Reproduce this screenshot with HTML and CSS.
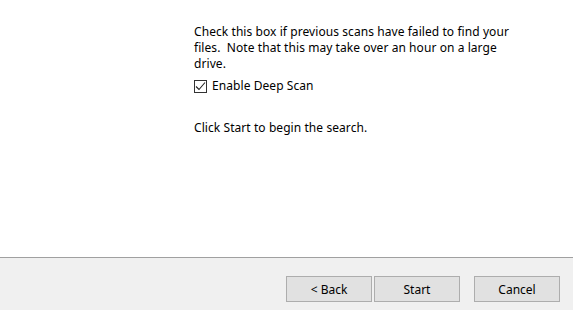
FILE: index.html
```html
<!DOCTYPE html>
<html>
<head>
<meta charset="utf-8">
<link rel="stylesheet" href="styles.css">
</head>
<body>
<div class="window">
  <main class="content">
    <p class="desc">Check this box if previous scans have failed to find your files.&nbsp; Note that this may take over an hour on a large drive.</p>
    <label class="check">
      <span class="box">
        <svg width="11" height="11" viewBox="0 0 11 11"><path d="M1 5.5 L4 8.5 L10 1.5" fill="none" stroke="#222" stroke-width="1.1"/></svg>
      </span>
      <span>Enable Deep Scan</span>
    </label>
    <p class="hint">Click Start to begin the search.</p>
  </main>
  <footer class="footer">
    <div class="btn-pair">
      <button class="btn">&lt; Back</button>
      <button class="btn">Start</button>
    </div>
    <button class="btn">Cancel</button>
  </footer>
</div>
</body>
</html>
```

FILE: styles.css
```css
* { box-sizing: border-box; }
html, body { margin: 0; padding: 0; }
body {
  width: 573px;
  height: 310px;
  overflow: hidden;
  background: #fff;
  font-family: "Segoe UI", "Noto Sans", "Open Sans", sans-serif;
  font-size: 12px;
  letter-spacing: 0.07px;
  color: #000;
}
.window {
  display: flex;
  flex-direction: column;
  height: 310px;
}
.content {
  height: 257px;
  padding: 24px 0 0 194px;
  background: #fff;
}
.desc {
  margin: 0;
  width: 335px;
  line-height: 16px;
}
.check {
  display: flex;
  align-items: center;
  gap: 5px;
  height: 16px;
  margin-top: 6px;
  line-height: 16px;
}
.box {
  width: 13px;
  height: 13px;
  border: 1px solid #333;
  background: #fff;
  display: flex;
  align-items: center;
  justify-content: center;
}
.box svg { display: block; }
.hint {
  margin: 26px 0 0;
  line-height: 16px;
}
.footer {
  flex: 1;
  background: #f0f0f0;
  border-top: 1px solid #a0a0a0;
  display: flex;
  justify-content: flex-end;
  align-items: flex-start;
  gap: 14px;
  padding: 18px 13px 0 0;
}
.btn-pair {
  display: flex;
  gap: 2px;
}
.btn {
  width: 86px;
  height: 26px;
  margin: 0;
  padding: 0;
  font: inherit;
  font-size: 12px;
  color: #000;
  background: #e1e1e1;
  border: 1px solid #adadad;
  border-radius: 0;
}
```
